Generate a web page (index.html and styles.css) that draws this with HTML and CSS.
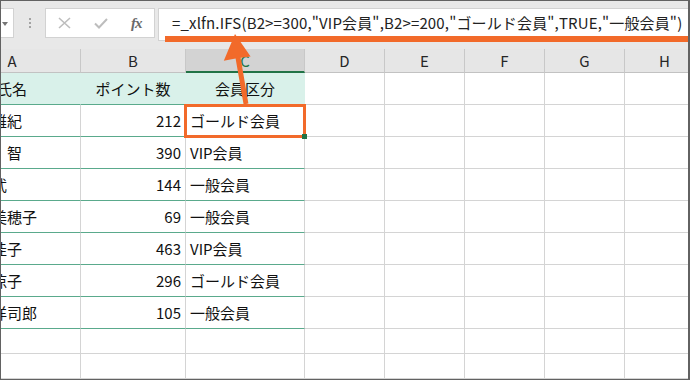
FILE: index.html
```html
<!DOCTYPE html>
<html lang="ja">
<head>
  <meta charset="UTF-8">
  <title>IFS関数</title>
  <link rel="stylesheet" href="styles.css">
</head>
<body>
  <div class="frame">
    <div class="toolbar">
      <div class="name-box"><span class="drop"></span></div>
      <div class="grip"><i></i><i></i><i></i></div>
      <div class="fx-box">
        <span class="fx-btn">
          <svg width="13" height="12" viewBox="0 0 13 12"><path d="M1 1 L12 11 M12 1 L1 11" stroke="#bdbdbd" stroke-width="1.6" fill="none"/></svg>
        </span>
        <span class="fx-btn">
          <svg width="14" height="11" viewBox="0 0 14 11"><path d="M1 5.5 L5 9.5 L13 1" stroke="#bdbdbd" stroke-width="2" fill="none"/></svg>
        </span>
        <span class="fx-btn fx-label">fx</span>
      </div>
      <div class="formula">=_xlfn.IFS(B2&gt;=300,"VIP会員",B2&gt;=200,"ゴールド会員",TRUE,"一般会員")</div>
    </div>

    <div class="sheet">
      <div class="col-head">A</div>
      <div class="col-head">B</div>
      <div class="col-head active">C</div>
      <div class="col-head">D</div>
      <div class="col-head">E</div>
      <div class="col-head">F</div>
      <div class="col-head">G</div>
      <div class="col-head">H</div>

      <div class="cell th">氏名</div>
      <div class="cell th">ポイント数</div>
      <div class="cell th">会員区分</div>
      <div class="cell"></div><div class="cell"></div><div class="cell"></div><div class="cell"></div><div class="cell"></div>

      <div class="cell td name">佐藤　雄紀</div>
      <div class="cell td num">212</div>
      <div class="cell td">ゴールド会員</div>
      <div class="cell"></div><div class="cell"></div><div class="cell"></div><div class="cell"></div><div class="cell"></div>

      <div class="cell td name">佐々木　智</div>
      <div class="cell td num">390</div>
      <div class="cell td">VIP会員</div>
      <div class="cell"></div><div class="cell"></div><div class="cell"></div><div class="cell"></div><div class="cell"></div>

      <div class="cell td name">山田　武</div>
      <div class="cell td num">144</div>
      <div class="cell td">一般会員</div>
      <div class="cell"></div><div class="cell"></div><div class="cell"></div><div class="cell"></div><div class="cell"></div>

      <div class="cell td name">鈴木　美穂子</div>
      <div class="cell td num">69</div>
      <div class="cell td">一般会員</div>
      <div class="cell"></div><div class="cell"></div><div class="cell"></div><div class="cell"></div><div class="cell"></div>

      <div class="cell td name">高橋　佳子</div>
      <div class="cell td num">463</div>
      <div class="cell td">VIP会員</div>
      <div class="cell"></div><div class="cell"></div><div class="cell"></div><div class="cell"></div><div class="cell"></div>

      <div class="cell td name">中村　涼子</div>
      <div class="cell td num">296</div>
      <div class="cell td">ゴールド会員</div>
      <div class="cell"></div><div class="cell"></div><div class="cell"></div><div class="cell"></div><div class="cell"></div>

      <div class="cell td name">小林　洋司郎</div>
      <div class="cell td num">105</div>
      <div class="cell td">一般会員</div>
      <div class="cell"></div><div class="cell"></div><div class="cell"></div><div class="cell"></div><div class="cell"></div>

      <div class="cell"></div><div class="cell"></div><div class="cell"></div><div class="cell"></div>
      <div class="cell"></div><div class="cell"></div><div class="cell"></div><div class="cell"></div>

      <div class="cell"></div><div class="cell"></div><div class="cell"></div><div class="cell"></div>
      <div class="cell"></div><div class="cell"></div><div class="cell"></div><div class="cell"></div>
    </div>

    <!-- callout overlays -->
    <div class="underline"></div>
    <div class="selection"><span class="handle"></span></div>
    <svg class="arrow" width="690" height="380" viewBox="0 0 690 380">
      <polygon points="243.6,104.6 235.6,58.6 223.8,60.7 235,34 250.6,56.6 240.6,57.7 248.4,103.4" fill="#f26a2a"/>
    </svg>
  </div>
</body>
</html>
```

FILE: styles.css
```css
* {
  margin: 0;
  padding: 0;
  box-sizing: border-box;
}

body {
  font-family: "Noto Sans CJK JP", "Noto Sans", sans-serif;
  background: #ffffff;
}

.frame {
  position: relative;
  width: 690px;
  height: 380px;
  border: 1px solid #626262;
  border-right-width: 2px;
  overflow: hidden;
  background: #ffffff;
}

/* formula bar */
.toolbar {
  display: flex;
  align-items: flex-start;
  height: 48px;
  padding-top: 7px;
  background: #e8e8e8;
}

.name-box {
  position: relative;
  width: 13px;
  height: 30px;
  background: #ffffff;
  border: 1px solid #d2d2d2;
  border-left: none;
}

.drop {
  position: absolute;
  left: 1px;
  top: 13px;
  border-left: 3px solid transparent;
  border-right: 3px solid transparent;
  border-top: 4px solid #757575;
}

.grip {
  display: flex;
  flex-direction: column;
  gap: 2px;
  margin: 10px 0 0 15px;
}

.grip i {
  display: block;
  width: 2px;
  height: 2px;
  background: #a3a3a3;
}

.fx-box {
  display: flex;
  align-items: center;
  width: 110px;
  height: 30px;
  margin-left: 14px;
  padding-left: 1px;
  background: #ffffff;
  border: 1px solid #d2d2d2;
}

.fx-btn {
  display: flex;
  justify-content: center;
  align-items: center;
  width: 36px;
}

.fx-label {
  font-family: "Liberation Serif", serif;
  font-style: italic;
  font-weight: bold;
  font-size: 15px;
  color: #6a6a6a;
  letter-spacing: -1px;
}

.formula {
  flex: 1;
  height: 33px;
  margin-left: 3px;
  padding: 3px 0 0 13px;
  background: #ffffff;
  border: 1px solid #d2d2d2;
  border-right: none;
  font-size: 15px;
  letter-spacing: 0.15px;
  color: #222222;
  white-space: nowrap;
  overflow: hidden;
}

/* worksheet */
.sheet {
  display: grid;
  grid-template-columns: 137px 105px 119px 80px 80px 80px 80px 80px;
  grid-template-rows: 24px repeat(8, 32px) 25px 25px;
  margin-left: -57px;
}

.col-head {
  display: flex;
  justify-content: center;
  align-items: center;
  background: #e6e6e6;
  border-right: 1px solid #c8c8c8;
  border-bottom: 1px solid #c2c2c2;
  font-size: 15px;
  color: #262626;
}

.col-head.active {
  background: #d3d3d3;
  color: #217346;
  border-bottom: 2px solid #217346;
}

.cell {
  display: flex;
  align-items: center;
  padding: 0 4px;
  border-right: 1px solid #d4d4d4;
  border-bottom: 1px solid #d4d4d4;
  font-size: 15px;
  color: #111111;
  white-space: nowrap;
}

.th {
  justify-content: center;
  background: #d9f1ea;
  border-right-color: #d9f1ea;
  border-bottom-color: #5aaa8c;
}

.td {
  border-bottom-color: #5aaa8c;
}

.name {
  padding-left: 3px;
}

.num {
  justify-content: flex-end;
}

/* callout */
.underline {
  position: absolute;
  top: 35px;
  left: 164px;
  width: 530px;
  height: 6px;
  background: #f26a2a;
}

.selection {
  position: absolute;
  top: 103px;
  left: 183px;
  width: 122px;
  height: 34px;
  border: 3px solid #f26a2a;
}

.handle {
  position: absolute;
  right: -4px;
  bottom: -4px;
  width: 5px;
  height: 5px;
  background: #217346;
}

.arrow {
  position: absolute;
  top: -1px;
  left: -1px;
}
```
